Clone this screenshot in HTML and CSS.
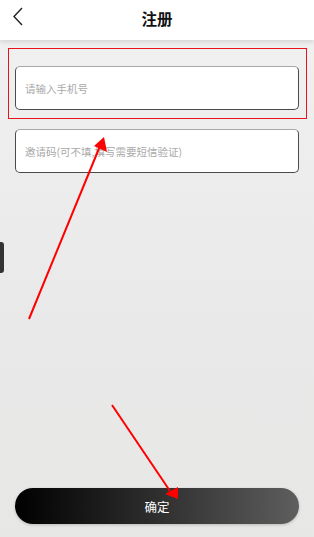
FILE: index.html
```html
<!DOCTYPE html>
<html lang="zh-CN">
<head>
  <meta charset="UTF-8">
  <meta name="viewport" content="width=device-width, initial-scale=1.0">
  <title>注册</title>
  <link rel="stylesheet" href="styles.css">
</head>
<body>

<div class="page">
  <div class="header">
    <span class="back">
      <svg width="14" height="20" viewBox="0 0 14 20"><polyline points="10,1 2,9.5 10,18" fill="none" stroke="#222" stroke-width="1.4"/></svg>
    </span>
    <h1>注册</h1>
  </div>

  <div class="main">
    <div class="mark-box">
      <input type="text" class="field" placeholder="请输入手机号">
    </div>
    <input type="text" class="field field-code" placeholder="邀请码(可不填,填写需要短信验证)">

    <button class="submit">确定</button>
  </div>

  <!-- 左侧悬浮小条 -->
  <div class="side-tab"></div>

  <!-- 标注箭头 -->
  <svg class="arrows" width="314" height="537" viewBox="0 0 314 537">
    <line x1="29" y1="319" x2="100" y2="146" stroke="#f00" stroke-width="2"/>
    <polygon points="104,137 107,152 94,146" fill="#f00"/>
    <line x1="112" y1="405" x2="170" y2="491" stroke="#f00" stroke-width="2"/>
    <polygon points="178,487 178,499 165,494" fill="#f00"/>
  </svg>
</div>

</body>
</html>
```

FILE: styles.css
```css
/* 页面 */
body {
  margin: 0;
  font-family: "Noto Sans CJK SC", "Liberation Sans", sans-serif;
}
.page {
  position: relative;
  width: 314px;
  height: 537px;
  display: flex;
  flex-direction: column;
  background: linear-gradient(180deg, #f1f1f1 0%, #e9e9e9 60%, #e7e7e6 100%);
  overflow: hidden;
}
.header {
  position: relative;
  height: 40px;
  flex-shrink: 0;
  display: flex;
  align-items: center;
  justify-content: center;
  background: #fff;
  box-shadow: 0 2px 5px rgba(0, 0, 0, 0.12);
  z-index: 1;
}
.back {
  position: absolute;
  left: 12px;
  top: 7px;
  width: 14px;
  height: 20px;
}
.header h1 {
  margin: 0 0 4px;
  font-size: 15.5px;
  font-weight: bold;
  color: #111;
}
.main {
  flex: 1;
  display: flex;
  flex-direction: column;
  padding: 8px 7px 13px 8px;
}
.mark-box {
  border: 1px solid #e8141c;
  padding: 17px 7px 8px 6px;
}
.field {
  display: block;
  width: 100%;
  height: 44px;
  box-sizing: border-box;
  padding: 0 9px;
  border: 1px solid #4a4a4a;
  border-top-color: #a8a8a8;
  border-radius: 5px;
  background: #fff;
  font-family: inherit;
  font-size: 10.5px;
  outline: none;
}
.field::placeholder {
  color: #a9a9a9;
}
.field-code {
  width: 284px;
  margin: 10px 0 0 7px;
}
.submit {
  margin: auto 0 0 7px;
  width: 284px;
  height: 36px;
  border: none;
  border-radius: 18px;
  background: linear-gradient(90deg, #000 0%, #2a2a2a 45%, #5e5e5e 100%);
  box-shadow: 0 1px 3px rgba(0, 0, 0, 0.2);
  color: #fff;
  font-family: inherit;
  font-size: 12.5px;
}
/* 左侧小条 */
.side-tab {
  position: absolute;
  left: 0;
  top: 242px;
  width: 4px;
  height: 31px;
  background: #333;
  border-radius: 0 3px 3px 0;
}
/* 标注 */
.arrows {
  position: absolute;
  left: 0;
  top: 0;
  pointer-events: none;
}
```
